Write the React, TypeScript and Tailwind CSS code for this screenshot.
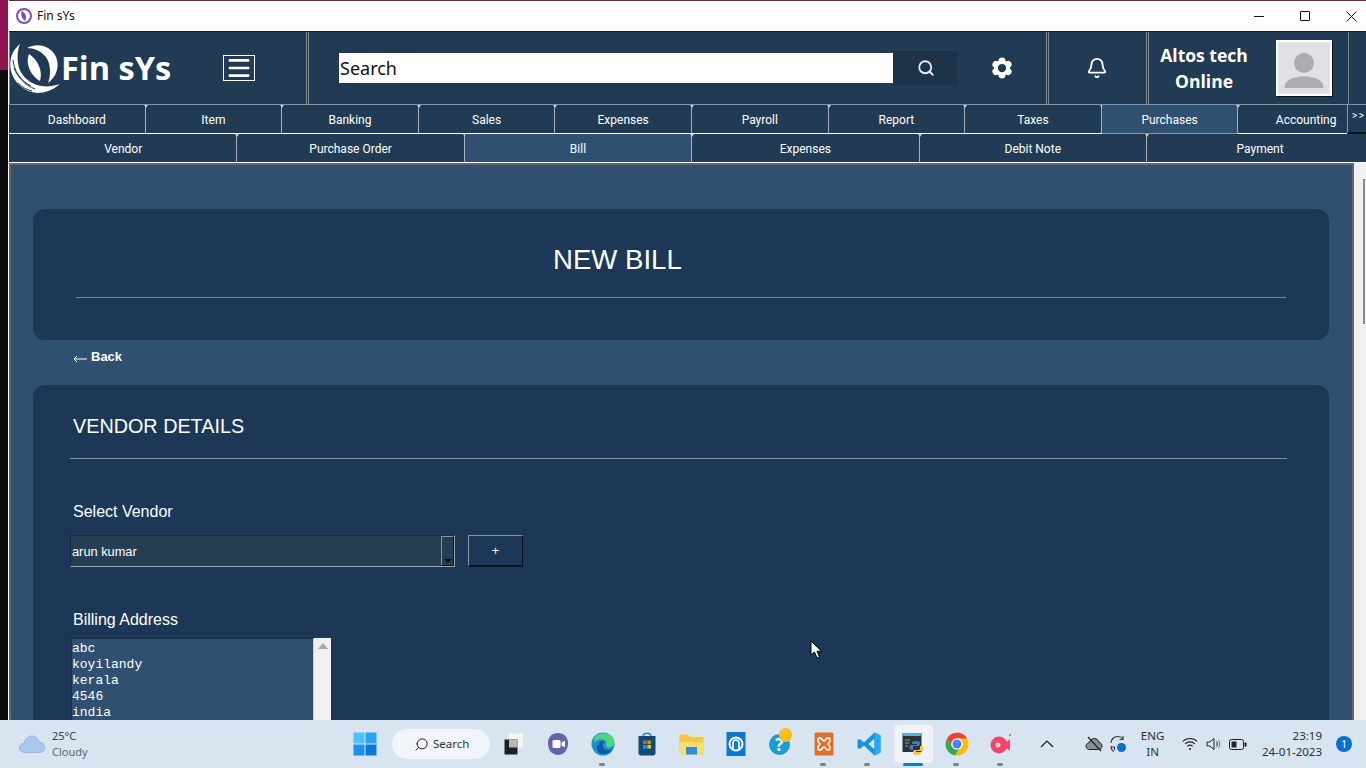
import React from 'react';
import { Search, Settings, Bell, Menu } from 'lucide-react';

const mainTabs = ['Dashboard', 'Item', 'Banking', 'Sales', 'Expenses', 'Payroll', 'Report', 'Taxes', 'Purchases', 'Accounting'];
const subTabs = ['Vendor', 'Purchase Order', 'Bill', 'Expenses', 'Debit Note', 'Payment'];
const address = ['abc', 'koyilandy', 'kerala', '4546', 'india'];

function Logo() {
  return (
    <svg width="50" height="50" viewBox="0 0 50 50" className="shrink-0">
      <path d="M10 1 C1 8 -2 20 2 31 C6 42 16 49 27 50 C35 50 43 47 50 41 C41 44 33 44 27 42 C17 39 9 30 8 20 C7 12 8 6 10 1Z" fill="#fff" />
      <path d="M4 25 C8 35 15 42 25 46 M3 17 C4 28 11 38 21 43 M8 40 C12 44 17 47 22 48" fill="none" stroke="#223b54" strokeWidth="1" />
      <path d="M17 5 C28 -1 41 3 46 14 C50 24 46 34 38 40 C41 32 41 21 36 14 C31 8 24 5 17 5Z" fill="#fff" />
      <path d="M19 11 C28 17 33 28 30 38 C21 33 15 21 19 11Z" fill="#fff" />
    </svg>
  );
}

function Win11() {
  return (
    <svg width="24" height="24" viewBox="0 0 24 24">
      <rect x="0.5" y="0.5" width="11" height="11" fill="#4cc2ff" />
      <rect x="12.5" y="0.5" width="11" height="11" fill="#2ba4ee" />
      <rect x="0.5" y="12.5" width="11" height="11" fill="#1a93e8" />
      <rect x="12.5" y="12.5" width="11" height="11" fill="#0a78d4" />
    </svg>
  );
}

function TaskIcon({ children, dot, active }: { children: React.ReactNode; dot?: boolean; active?: boolean }) {
  return (
    <div className={`relative w-[44.3px] h-full flex items-center justify-center ${active ? 'before:content-[""] before:absolute before:left-[3px] before:top-[5px] before:w-[39px] before:h-[38px] before:rounded-[4px] before:bg-[#eef3f8]' : ''}`}>
      <div className="relative flex">{children}</div>
      {dot && !active && <span className="absolute bottom-[2px] left-[18px] w-[6px] h-[3px] rounded-full bg-[#78828c]" />}
      {active && <span className="absolute bottom-[2px] left-[12px] w-[20px] h-[3px] rounded-full bg-[#0a78d4]" />}
    </div>
  );
}

function Taskbar() {
  return (
    <div className="h-[48px] shrink-0 flex items-center bg-[#d8e4ef] text-[#1f2933] [font-family:'Noto_Sans','Open_Sans',sans-serif]">
      <div className="w-[343px] flex items-center pl-[19px] gap-[7px]">
        <svg width="26" height="18" viewBox="0 0 26 18">
          <path d="M6 17.5 C2 17.5 0.5 15 0.5 12.5 C0.5 10 2.5 8.5 5 8.5 C6 3.5 9.5 1 13 1 C16.5 1 19 3.5 20 7 C23 7 25.5 9 25.5 12.5 C25.5 15.5 23.5 17.5 20.5 17.5Z" fill="#a9c8f0" stroke="#86b0e6" strokeWidth="0.8" />
        </svg>
        <div className="text-[11px] leading-[16px] text-[#33404d]">
          <div>25°C</div>
          <div className="text-[#5c6873]">Cloudy</div>
        </div>
      </div>
      <div className="w-[44px] h-full flex items-center justify-center"><Win11 /></div>
      <div className="ml-[5px] w-[98px] h-[30px] rounded-full bg-[#f1f5f9] flex items-center pl-[22px] gap-[4px] text-[11.5px] text-[#2c3640] mr-[2px]">
        <Search size={15} strokeWidth={1.6} className="-scale-x-100 text-[#222]" />
        <span>Search</span>
      </div>
      <TaskIcon>
        <svg width="20" height="22" viewBox="0 0 20 22">
          <rect x="5" y="0.5" width="14" height="14" fill="#f4f4f4" />
          <rect x="0.5" y="6.5" width="13" height="15" fill="#1f1f1f" />
          <rect x="5" y="6.5" width="8.5" height="8" fill="#b8b8b8" />
        </svg>
      </TaskIcon>
      <TaskIcon>
        <svg width="22" height="24" viewBox="0 0 22 24">
          <path d="M11 1 C17 1 21 5 21 11 C21 18 17 23 11 23 C9 23 7 22 5.5 21 C3 20 1 16 1 11 C1 5 5 1 11 1Z" fill="#6264a7" />
          <rect x="5.5" y="8" width="8" height="8" rx="1.5" fill="#fff" />
          <path d="M14.5 10.5 L18 8.5 V15.5 L14.5 13.5Z" fill="#fff" />
        </svg>
      </TaskIcon>
      <TaskIcon dot>
        <svg width="24" height="24" viewBox="0 0 24 24">
          <circle cx="12" cy="12" r="11.5" fill="#1a8ed6" />
          <path d="M3 7 C6 0 18 -1 22.5 7 C24.5 12 22 16 17 15.5 C13 15 17 11 14 8.5 C10 6 5 8 3 11Z" fill="#4fd47c" />
          <path d="M8 13 C8 9 12 8 14 10 C11 10 11 14 13 16.5 C15 18.5 19 18.5 21 17 C18 23 9 24 6 18 C5 15 7 12 8 13Z" fill="#0c5aa0" />
        </svg>
      </TaskIcon>
      <TaskIcon>
        <svg width="18" height="24" viewBox="0 0 18 24">
          <path d="M5 5 C5 0 13 0 13 5" fill="none" stroke="#2a86c8" strokeWidth="1.4" />
          <path d="M0.5 4 H17.5 V21 C17.5 22.5 16.5 23.5 15 23.5 H3 C1.5 23.5 0.5 22.5 0.5 21Z" fill="#0f4a78" />
          <rect x="5" y="8.5" width="3.6" height="3.6" fill="#f25022" />
          <rect x="9.4" y="8.5" width="3.6" height="3.6" fill="#7fba00" />
          <rect x="5" y="13" width="3.6" height="3.6" fill="#00a4ef" />
          <rect x="9.4" y="13" width="3.6" height="3.6" fill="#ffb900" />
        </svg>
      </TaskIcon>
      <TaskIcon>
        <svg width="25" height="21" viewBox="0 0 25 21">
          <path d="M0.5 2 C0.5 1 1 0.5 2 0.5 H9 L11 3 H23 C24 3 24.5 3.5 24.5 4.5 V19 C24.5 20 24 20.5 23 20.5 H2 C1 20.5 0.5 20 0.5 19Z" fill="#f7c83e" />
          <path d="M0.5 8 H24.5 V19 C24.5 20 24 20.5 23 20.5 H2 C1 20.5 0.5 20 0.5 19Z" fill="#fcdc6a" />
          <rect x="7" y="13" width="11" height="7.5" fill="#2a8fd6" />
        </svg>
      </TaskIcon>
      <TaskIcon>
        <svg width="20" height="24" viewBox="0 0 20 24" className="-my-px">
          <rect x="0.5" y="0" width="19" height="24" fill="#0a78d4" />
          <circle cx="10" cy="12" r="6.5" fill="none" stroke="#fff" strokeWidth="2" />
          <path d="M7 18 V11 C7 7 13 7 13 11 V18" fill="none" stroke="#fff" strokeWidth="1.6" />
        </svg>
      </TaskIcon>
      <TaskIcon>
        <div className="w-[24px] h-[24px] relative">
          <div className="w-[23px] h-[23px] mt-[1px] rounded-full bg-[#1b9ad6] border border-[#e8f4fb] text-white font-bold text-[17px] leading-[21px] text-center">?</div>
          <span className="absolute -top-[4px] left-[11px] w-[13px] h-[14px] rounded-full bg-[#fbbf18]" />
        </div>
      </TaskIcon>
      <TaskIcon dot>
        <svg width="20" height="24" viewBox="0 0 20 24">
          <rect x="0.5" y="0.5" width="19" height="23" rx="1.5" fill="#e2702a" />
          <path d="M5 6 C8 5 8 9 10 9 C12 9 12 5 15 6 C17 7 16 10 14 12 C16 14 17 17 15 18 C12 19 12 15 10 15 C8 15 8 19 5 18 C3 17 4 14 6 12 C4 10 3 7 5 6Z" fill="none" stroke="#fff" strokeWidth="1.5" />
        </svg>
      </TaskIcon>
      <TaskIcon dot>
        <svg width="24" height="24" viewBox="0 0 24 24">
          <path d="M17.5 0.5 L23.5 3.5 V20.5 L17.5 23.5 L7 13.5 L2.5 17 L0.5 16 V8 L2.5 7 L7 10.5Z M17.5 6.5 L11.5 12 L17.5 17.5Z" fill="#1593dd" fillRule="evenodd" />
          <path d="M17.5 0.5 L23.5 3.5 V20.5 L17.5 23.5Z" fill="#2aa8ee" />
        </svg>
      </TaskIcon>
      <TaskIcon active>
        <svg width="22" height="24" viewBox="0 0 22 24">
          <rect x="0.5" y="1" width="19" height="19" fill="#2b3136" />
          <rect x="0.5" y="1" width="19" height="3" fill="#5fa8d8" />
          <path d="M3 8 H8 M3 11 H7 M3 14 H6" stroke="#6fbf73" strokeWidth="1" />
          <path d="M14 9 C10 9 10 10 10 12 H15 V13 H9 C7 13 7 18 9 18 H11 V15.5 C11 14 12 14 13 14 H16 C18 14 18 12 18 11 C18 9 16 9 14 9Z" fill="#3b7fb5" />
          <path d="M15 23 C19 23 19 22 19 20 H14 V19 H20 C22 19 22 14 20 14 H18 V16.5 C18 18 17 18 16 18 H13 C11 18 11 20 11 21 C11 23 13 23 15 23Z" fill="#f4c93c" />
        </svg>
      </TaskIcon>
      <TaskIcon dot>
        <svg width="24" height="24" viewBox="0 0 24 24">
          <path d="M12 12 L12 0.5 A11.5 11.5 0 0 1 22 6.5 Z" fill="#ea4335" />
          <path d="M2 6.5 A11.5 11.5 0 0 1 22 6.5 L12 6.5 L7 15Z" fill="#ea4335" />
          <path d="M22 6.5 A11.5 11.5 0 0 1 10 23.4 L15 15 L12 6.5Z" fill="#fbbc05" />
          <path d="M2 6.5 A11.5 11.5 0 0 0 10 23.4 L15 15 L7 15Z" fill="#34a853" />
          <circle cx="12" cy="12" r="5.8" fill="#fff" />
          <circle cx="12" cy="12" r="4.5" fill="#4285f4" />
        </svg>
      </TaskIcon>
      <TaskIcon dot>
        <svg width="22" height="22" viewBox="0 0 22 22">
          <circle cx="9" cy="12" r="8.5" fill="#f2476a" />
          <circle cx="8" cy="12" r="2.5" fill="#ffc9d4" />
          <path d="M14 11 L20 6 V18 L14 13Z" fill="#f2476a" />
          <circle cx="20" cy="2" r="1" fill="#f2476a" />
        </svg>
      </TaskIcon>
      <div className="w-[47px] flex justify-center">
        <svg width="14" height="8" viewBox="0 0 14 8"><path d="M1 7 L7 1 L13 7" fill="none" stroke="#1c1c1c" strokeWidth="1.2" /></svg>
      </div>
      <div className="w-[24px] ml-[11px] flex justify-center">
        <svg width="18" height="16" viewBox="0 0 18 16">
          <path d="M5 13.5 C2 13.5 1 11.5 1 10 C1 8 3 7 4 7 C5 4 7 2.5 9.5 2.5 C12 2.5 14 4.5 14 6.5 C16 6.5 17 8.5 17 10 C17 12 15.5 13.5 13.5 13.5Z" fill="#8a8f94" stroke="#222" strokeWidth="1" />
          <path d="M3 1 L16 15" stroke="#222" strokeWidth="1.2" />
        </svg>
      </div>
      <div className="w-[24px] flex justify-center">
        <svg width="18" height="18" viewBox="0 0 18 18">
          <path d="M2 8 C2 4 5 1.5 9 1.5 C11 1.5 13 2.5 14 4 M14 1 V4.5 H10.5" fill="none" stroke="#333" strokeWidth="1.1" />
          <path d="M2 11 C2 14 3 15.5 5 16.5 M2 12 H5.5 V15" fill="none" stroke="#333" strokeWidth="1.1" />
          <circle cx="12.5" cy="12.5" r="4.5" fill="#0a6fd0" />
        </svg>
      </div>
      <div className="w-[46px] text-center text-[11.5px] leading-[16px] text-[#27313a]">
        <div>ENG</div>
        <div>IN</div>
      </div>
      <div className="w-[24px] ml-[2px] flex justify-center">
        <svg width="16" height="14" viewBox="0 0 16 14" fill="none" stroke="#222" strokeWidth="1.1">
          <path d="M0.8 4.5 C4.5 0.5 11.5 0.5 15.2 4.5" />
          <path d="M3 7 C5.5 4.2 10.5 4.2 13 7" />
          <path d="M5.3 9.4 C6.8 8 9.2 8 10.7 9.4" />
          <circle cx="8" cy="12" r="1" fill="#222" stroke="none" />
        </svg>
      </div>
      <div className="w-[24px] flex justify-center">
        <svg width="16" height="14" viewBox="0 0 16 14" fill="none" stroke="#222" strokeWidth="1">
          <path d="M1 5 H4 L8 1.5 V12.5 L4 9 H1Z" />
          <path d="M10.5 4.5 C11.5 6 11.5 8 10.5 9.5" />
          <path d="M12.5 3 C14.2 5.5 14.2 8.5 12.5 11" stroke="#777" />
        </svg>
      </div>
      <div className="w-[24px] flex justify-center">
        <svg width="18" height="11" viewBox="0 0 18 11">
          <rect x="0.5" y="0.5" width="14" height="10" rx="2" fill="none" stroke="#222" />
          <rect x="2.5" y="2.5" width="5" height="6" fill="#222" />
          <rect x="15.5" y="3.5" width="2" height="4" fill="#222" />
        </svg>
      </div>
      <div className="ml-auto w-[72px] text-right text-[11.5px] leading-[16px] text-[#27313a]">
        <div>23:19</div>
        <div>24-01-2023</div>
      </div>
      <div className="w-[44px] flex justify-center">
        <span className="w-[16px] h-[16px] rounded-full bg-[#0a6fd0] text-white text-[10px] leading-[16px] text-center">1</span>
      </div>
    </div>
  );
}

export default function App() {
  return (
    <div className="relative w-[1366px] h-[768px] overflow-hidden flex flex-col bg-[#0b0c10]">
      <div className="flex-1 min-h-0 flex">
        {/* desktop peeking out left of the window */}
        <div className="w-[8px] shrink-0 flex flex-col">
          <div className="h-[70px] bg-[#8f1450]" />
          <div className="flex-1 bg-[#0a0b0f]" />
        </div>
        <div className="flex-1 min-w-0 flex flex-col bg-white border-l border-white">
          <div className="h-px bg-[#6e2a50] shrink-0" />
          {/* window title bar */}
          <div className="h-[30px] shrink-0 flex items-center pl-[7px] text-[12px] text-[#111] [font-family:'Noto_Sans',sans-serif]">
            <svg width="16" height="16" viewBox="0 0 16 16" className="mr-[5px]">
              <circle cx="8" cy="8" r="7" fill="none" stroke="#7a4fc0" strokeWidth="2" />
              <path d="M6 3 C10 5 11 10 9 13 C6 11 4 6 6 3Z" fill="#7a4fc0" />
            </svg>
            <span>Fin sYs</span>
            <div className="ml-auto flex items-center text-[#111] mr-[-8px]">
              <div className="w-[46px] flex justify-center"><div className="w-[10px] h-px bg-[#111]" /></div>
              <div className="w-[46px] flex justify-center"><div className="w-[10px] h-[10px] border border-[#111] rounded-[1px]" /></div>
              <div className="w-[46px] flex justify-center">
                <svg width="11" height="11" viewBox="0 0 11 11"><path d="M0.5 0.5 L10.5 10.5 M10.5 0.5 L0.5 10.5" stroke="#111" strokeWidth="1" /></svg>
              </div>
            </div>
          </div>

          {/* app header */}
          <div className="h-[73px] shrink-0 flex bg-[#223b54] border-t border-[#12202e] [font-family:'Open_Sans','Noto_Sans',sans-serif] text-white">
            <div className="w-[298px] border-l border-r border-[#7d8790] flex items-center">
              <Logo />
              <span className="text-[32.5px] font-bold leading-none ml-px">Fin sYs</span>
              <div className="ml-[52px] w-[32px] h-[26px] border border-white flex items-center justify-center">
                <Menu size={26} strokeWidth={2.4} className="text-white scale-x-[1.05]" />
              </div>
            </div>
            <div className="w-[739px] ml-px border-l border-r border-[#7d8790] flex items-center pl-[30px]">
              <div className="w-[554px] h-[30px] bg-white text-[#111] text-[18px] leading-[30px] pl-px [font-family:'Noto_Sans',sans-serif]">Search</div>
              <div className="w-[65px] h-[35px] bg-[#1c3349] flex items-center justify-center">
                <Search size={18} strokeWidth={2.4} className="text-white/90" />
              </div>
              <div className="w-[88px] flex justify-center">
                <Settings size={22} strokeWidth={3} fill="#fff" className="text-white [&_circle]:fill-[#223b54] [&_circle]:stroke-[#223b54]" />
              </div>
            </div>
            <div className="w-[99px] ml-px border-l border-r border-[#7d8790] flex items-center justify-center pr-px">
              <Bell size={22} strokeWidth={2} />
            </div>
            <div className="w-[201px] ml-px border-l border-r border-[#7d8790] flex items-center">
              <div className="w-[110px] text-center text-[17.5px] font-bold leading-[26px]">
                <div>Altos tech</div>
                <div>Online</div>
              </div>
              <div className="ml-[17px] w-[56px] h-[56px] bg-[#dfe1e4] border-2 border-white shadow-[1px_1px_0_#111] flex items-end justify-center overflow-hidden">
                <svg width="40" height="36" viewBox="0 0 40 36" className="mb-[6px]">
                  <circle cx="20" cy="11" r="10" fill="#a9adb2" />
                  <path d="M0.5 36 C1 26 12 24.5 20 24.5 C28 24.5 39 26 39.5 36Z" fill="#a9adb2" />
                </svg>
              </div>
            </div>
          </div>

          {/* main tabs */}
          <div className="h-[30px] shrink-0 flex bg-[#223b54] border-t border-[#8a949e] text-[12px] text-white [font-family:'Roboto',sans-serif]">
            <div className="flex-1 min-w-0 flex overflow-hidden">
              {mainTabs.map((t) => (
                <div key={t} className={`relative w-[136.6px] shrink-0 flex items-center justify-center pt-px border-r border-[#a8b0b8] border-b ${t === 'Purchases' ? 'bg-[#2f5070] border-b-[#8a949e]' : 'border-b-white'} before:content-[""] before:absolute before:right-[-3px] before:top-0 before:border-x-[2px] before:border-t-[3px] before:border-x-transparent before:border-t-[#c8ced4]`}>
                  {t}
                </div>
              ))}
            </div>
            <div className="w-[19px] shrink-0 bg-[#223b54] border-l border-[#8a949e] border-b-2 border-b-[#111] text-[10px] leading-[22px] pl-[4px] whitespace-nowrap overflow-hidden tracking-[1.5px]">&gt;&gt;</div>
          </div>

          {/* sub tabs */}
          <div className="h-[29px] shrink-0 flex pl-px bg-[#223b54] border-b border-white text-[12px] text-white [font-family:'Roboto',sans-serif] overflow-hidden">
            {subTabs.map((t) => (
              <div key={t} className={`relative w-[227.4px] shrink-0 flex items-center justify-center pt-px border-r border-[#a8b0b8] ${t === 'Bill' ? 'bg-[#2f5070]' : ''} before:content-[""] before:absolute before:right-[-3px] before:top-0 before:border-x-[2px] before:border-t-[3px] before:border-x-transparent before:border-t-[#c8ced4]`}>
                {t}
              </div>
            ))}
          </div>

          {/* page body */}
          <div className="flex-1 min-h-0 flex overflow-hidden">
            <div className="flex-1 min-w-0 bg-[#2f5070] border-t-2 border-l-2 border-r-2 border-[#666] pt-[44px] pl-[22px] pr-[23px] overflow-hidden [font-family:'Liberation_Sans',Arial,sans-serif] text-white">
              <div className="h-[131px] rounded-[12px] bg-[#1c3856] pt-[35px] px-[43px]">
                <div className="text-[27.6px] leading-[32px] pl-[477px]">NEW BILL</div>
                <div className="h-px bg-[#7f8a96] mt-[21px]" />
              </div>
              <div className="h-[45px] pl-[40px] pt-[9px] flex items-start text-[13px] font-bold leading-[16px]">
                <svg width="14" height="8" viewBox="0 0 14 8" className="mt-[6px] mr-[4px]">
                  <path d="M14 4 H1 M4 1 L1 4 L4 7" fill="none" stroke="#fff" strokeWidth="1" />
                </svg>
                Back
              </div>
              <div className="h-[420px] rounded-[12px] bg-[#1c3856] pt-[28px] pl-[37px] pr-[42px]">
                <div className="pl-[3px] text-[19.8px] leading-[26px]">VENDOR DETAILS</div>
                <div className="h-px bg-[#8f8f86] mt-[19px]" />
                <div className="pl-[3px] mt-[43px] text-[16px] leading-[20px]">Select Vendor</div>
                <div className="flex mt-[13px] gap-[13px]">
                  <div className="w-[385px] h-[32px] flex items-center justify-between bg-[#253e54] border-t border-[#15283a] border-l border-l-[#15283a] border-b border-b-[#9aa3ab] border-r border-r-[#9aa3ab] text-[12.8px] pl-[1px]">
                    <span className="pt-[2px]">arun kumar</span>
                    <div className="w-[13px] h-[30px] border border-[#8a939b] border-r-[#111] border-b-[#111] flex items-end justify-center pb-[2px]">
                      <span className="border-x-[4px] border-t-[4px] border-x-transparent border-t-[#111]" />
                    </div>
                  </div>
                  <div className="w-[55px] h-[32px] flex items-center justify-center border border-[#8a939b] border-r-[#0a1118] border-b-[#0a1118] border-b-2 text-[13px]">+</div>
                </div>
                <div className="pl-[3px] mt-[43px] text-[16px] leading-[20px]">Billing Address</div>
                <div className="flex mt-[8px] ml-px w-[260px] h-[100px]">
                  <div className="flex-1 bg-[#2f5070] border-t border-l border-[#1a2c3e] border-r border-r-[#c8ccd0] pt-[2px] text-[13px] leading-[16px] [font-family:'Liberation_Mono',monospace]">
                    {address.map((l) => (
                      <div key={l}>{l}</div>
                    ))}
                  </div>
                  <div className="w-[17px] bg-[#f0f0f0] flex justify-center pt-[5px]">
                    <span className="w-0 h-0 border-x-[5px] border-b-[6px] border-x-transparent border-b-[#a6a6a6]" />
                  </div>
                </div>
              </div>
            </div>
            <div className="w-[12px] shrink-0 bg-[#f0f0f0] pt-[16px] flex justify-end pr-px">
              <div className="w-[2px] h-[145px] bg-[#8a8a8a]" />
            </div>
          </div>
        </div>
      </div>
      <Taskbar />
      {/* mouse pointer over the page */}
      <svg width="13" height="19" viewBox="0 0 13 19" className="absolute left-[810px] top-[640px]">
        <path d="M1 1 V15 L4.5 12 L7 18 L9.5 17 L7 11.2 H11.5Z" fill="#fff" stroke="#000" strokeWidth="1" />
      </svg>
    </div>
  );
}
